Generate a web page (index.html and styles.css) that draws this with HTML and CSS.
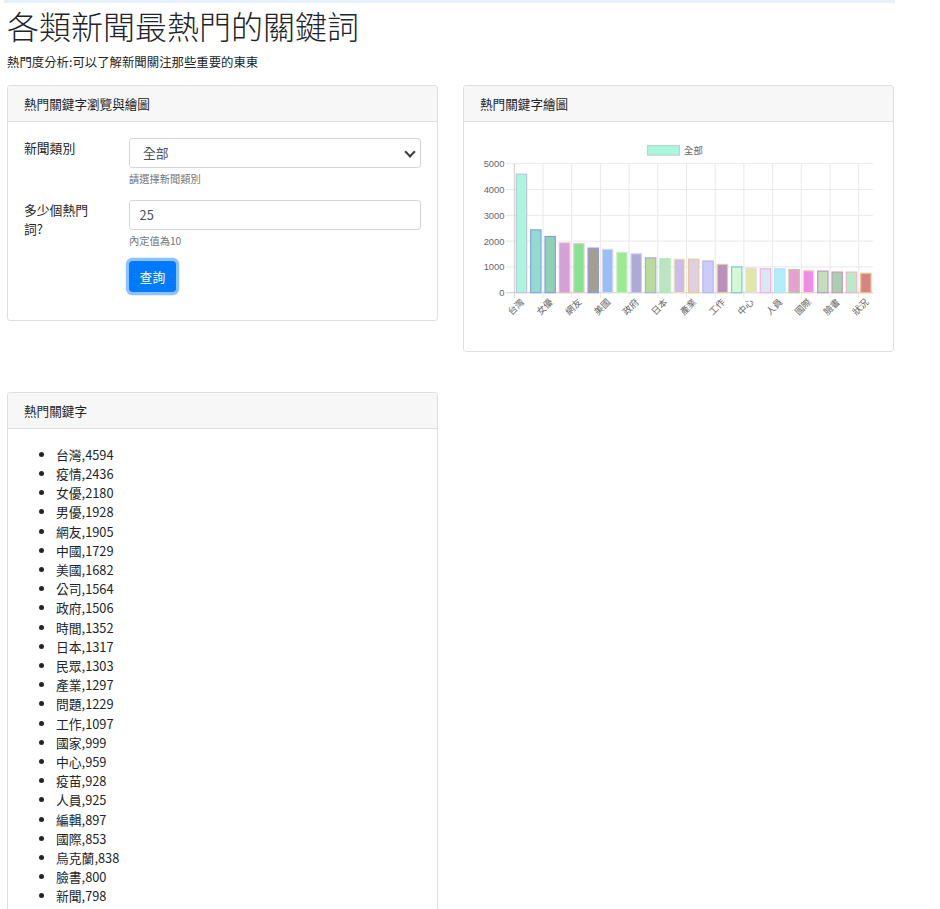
FILE: index.html
```html
<!DOCTYPE html>
<html lang="zh-Hant">
<head>
<meta charset="utf-8">
<title>各類新聞最熱門的關鍵詞</title>
<link rel="stylesheet" href="styles.css">
</head>
<body>
<div class="topbar"></div>
<div class="container">
  <h1 class="title">各類新聞最熱門的關鍵詞</h1>
  <p class="lead">熱門度分析:可以了解新聞關注那些重要的東東</p>

  <div class="row">
    <div class="card">
      <div class="card-header">熱門關鍵字瀏覽與繪圖</div>
      <div class="card-body">
        <div class="field">
          <label class="label">新聞類別</label>
          <div class="control">
            <span class="select-wrap">
              <select class="select">
                <option>全部</option>
              </select>
            </span>
            <div class="help">請選擇新聞類別</div>
          </div>
        </div>
        <div class="field">
          <label class="label">多少個熱門詞?</label>
          <div class="control">
            <input class="input" type="text" value="25">
            <div class="help">內定值為10</div>
          </div>
        </div>
        <div class="field">
          <span class="label"></span>
          <div class="control">
            <button class="btn" type="button">查詢</button>
          </div>
        </div>
      </div>
    </div>

    <div class="card">
      <div class="card-header">熱門關鍵字繪圖</div>
      <div class="card-body chart-body">
        <svg class="chart" width="429" height="229" viewBox="464 121 429 229" xmlns="http://www.w3.org/2000/svg">
          <g class="legend">
            <rect x="647.5" y="144.5" width="32" height="9.6" fill="#a8f8dc" stroke="#c4ccd6" stroke-width="1.2"/>
            <text x="684" y="152.6" class="tick">全部</text>
          </g>
          <g stroke="#e9e9e9" stroke-width="1">
            <line x1="506" y1="162.7" x2="873" y2="162.7"/>
            <line x1="506" y1="188.5" x2="873" y2="188.5"/>
            <line x1="506" y1="214.3" x2="873" y2="214.3"/>
            <line x1="506" y1="240.1" x2="873" y2="240.1"/>
            <line x1="506" y1="265.9" x2="873" y2="265.9"/>
            <line x1="543.0" y1="162.7" x2="543.0" y2="297"/>
            <line x1="571.7" y1="162.7" x2="571.7" y2="297"/>
            <line x1="600.4" y1="162.7" x2="600.4" y2="297"/>
            <line x1="629.1" y1="162.7" x2="629.1" y2="297"/>
            <line x1="657.8" y1="162.7" x2="657.8" y2="297"/>
            <line x1="686.5" y1="162.7" x2="686.5" y2="297"/>
            <line x1="715.2" y1="162.7" x2="715.2" y2="297"/>
            <line x1="743.9" y1="162.7" x2="743.9" y2="297"/>
            <line x1="772.6" y1="162.7" x2="772.6" y2="297"/>
            <line x1="801.3" y1="162.7" x2="801.3" y2="297"/>
            <line x1="830.0" y1="162.7" x2="830.0" y2="297"/>
            <line x1="858.7" y1="162.7" x2="858.7" y2="297"/>
          </g>
          <g stroke="#cfcfcf" stroke-width="1">
            <line x1="506" y1="291.7" x2="873" y2="291.7"/>
            <line x1="514.3" y1="162.7" x2="514.3" y2="297"/>
          </g>
          <g class="tick" text-anchor="end">
            <text x="504.5" y="166.1">5000</text>
            <text x="504.5" y="191.9">4000</text>
            <text x="504.5" y="217.7">3000</text>
            <text x="504.5" y="243.5">2000</text>
            <text x="504.5" y="269.3">1000</text>
            <text x="504.5" y="295.1">0</text>
          </g>
          <g stroke-width="1.2">
            <rect x="516.31" y="173.17" width="10.33" height="118.53" fill="#a8f8dc" stroke="#c4c0e4"/>
            <rect x="530.66" y="228.85" width="10.33" height="62.85" fill="#90dcd0" stroke="#88a4e4"/>
            <rect x="545.01" y="235.46" width="10.33" height="56.24" fill="#90d0b4" stroke="#889ee4"/>
            <rect x="559.36" y="241.96" width="10.33" height="49.74" fill="#d4a0d8" stroke="#f0b8c0"/>
            <rect x="573.71" y="242.55" width="10.33" height="49.15" fill="#84e490" stroke="#f4c8c4"/>
            <rect x="588.06" y="247.09" width="10.33" height="44.61" fill="#a29e90" stroke="#949ce8"/>
            <rect x="602.41" y="248.30" width="10.33" height="43.40" fill="#98c0f8" stroke="#dcd6ea"/>
            <rect x="616.76" y="251.35" width="10.33" height="40.35" fill="#9cea90" stroke="#ccf0cc"/>
            <rect x="631.11" y="252.85" width="10.33" height="38.85" fill="#aeaad6" stroke="#ccccf4"/>
            <rect x="645.46" y="256.82" width="10.33" height="34.88" fill="#b8dc9c" stroke="#aaaaea"/>
            <rect x="659.81" y="257.72" width="10.33" height="33.98" fill="#bce4c0" stroke="#acf2ac"/>
            <rect x="674.16" y="258.08" width="10.33" height="33.62" fill="#ccbcec" stroke="#ece8b8"/>
            <rect x="688.51" y="258.24" width="10.33" height="33.46" fill="#dcd0e4" stroke="#f0c49a"/>
            <rect x="702.86" y="259.99" width="10.33" height="31.71" fill="#ccccf8" stroke="#b6b6f4"/>
            <rect x="717.21" y="263.40" width="10.33" height="28.30" fill="#bc90bc" stroke="#dcd0a0"/>
            <rect x="731.56" y="265.93" width="10.33" height="25.77" fill="#d4f8d4" stroke="#74d0c8"/>
            <rect x="745.91" y="266.96" width="10.33" height="24.74" fill="#e0e8a4" stroke="#e6dee8"/>
            <rect x="760.26" y="267.76" width="10.33" height="23.94" fill="#d8e8f4" stroke="#f4b0e6"/>
            <rect x="774.61" y="267.83" width="10.33" height="23.87" fill="#b4ecf8" stroke="#b0e6fc"/>
            <rect x="788.96" y="268.56" width="10.33" height="23.14" fill="#e8a0cc" stroke="#bac8aa"/>
            <rect x="803.31" y="269.69" width="10.33" height="22.01" fill="#f08ce8" stroke="#fcd8b0"/>
            <rect x="817.66" y="270.08" width="10.33" height="21.62" fill="#c8dcc0" stroke="#b89cc8"/>
            <rect x="832.01" y="271.06" width="10.33" height="20.64" fill="#a8d0b0" stroke="#c89cb8"/>
            <rect x="846.36" y="271.11" width="10.33" height="20.59" fill="#b8ecc4" stroke="#eeb8c6"/>
            <rect x="860.71" y="272.30" width="10.33" height="19.40" fill="#d48484" stroke="#f4c490"/>
          </g>
          <g class="tick xlab" text-anchor="end">
            <text transform="translate(522.5 299.5) rotate(-45)" dy="0.35em">台灣</text>
            <text transform="translate(551.2 299.5) rotate(-45)" dy="0.35em">女優</text>
            <text transform="translate(579.9 299.5) rotate(-45)" dy="0.35em">網友</text>
            <text transform="translate(608.6 299.5) rotate(-45)" dy="0.35em">美國</text>
            <text transform="translate(637.3 299.5) rotate(-45)" dy="0.35em">政府</text>
            <text transform="translate(666.0 299.5) rotate(-45)" dy="0.35em">日本</text>
            <text transform="translate(694.7 299.5) rotate(-45)" dy="0.35em">產業</text>
            <text transform="translate(723.4 299.5) rotate(-45)" dy="0.35em">工作</text>
            <text transform="translate(752.1 299.5) rotate(-45)" dy="0.35em">中心</text>
            <text transform="translate(780.8 299.5) rotate(-45)" dy="0.35em">人員</text>
            <text transform="translate(809.5 299.5) rotate(-45)" dy="0.35em">國際</text>
            <text transform="translate(838.2 299.5) rotate(-45)" dy="0.35em">臉書</text>
            <text transform="translate(866.9 299.5) rotate(-45)" dy="0.35em">狀況</text>
          </g>
        </svg>
      </div>
    </div>
  </div>

  <div class="row">
    <div class="card">
      <div class="card-header">熱門關鍵字</div>
      <div class="card-body">
        <ul class="kw-list">
          <li>台灣,4594</li>
          <li>疫情,2436</li>
          <li>女優,2180</li>
          <li>男優,1928</li>
          <li>網友,1905</li>
          <li>中國,1729</li>
          <li>美國,1682</li>
          <li>公司,1564</li>
          <li>政府,1506</li>
          <li>時間,1352</li>
          <li>日本,1317</li>
          <li>民眾,1303</li>
          <li>產業,1297</li>
          <li>問題,1229</li>
          <li>工作,1097</li>
          <li>國家,999</li>
          <li>中心,959</li>
          <li>疫苗,928</li>
          <li>人員,925</li>
          <li>編輯,897</li>
          <li>國際,853</li>
          <li>烏克蘭,838</li>
          <li>臉書,800</li>
          <li>新聞,798</li>
          <li>狀況,752</li>
        </ul>
      </div>
    </div>
  </div>
</div>
</body>
</html>
```

FILE: styles.css
```css
* {
  box-sizing: border-box;
}

body {
  margin: 0;
  font-family: "Noto Sans CJK TC", "Noto Sans", sans-serif;
  font-size: 12.8px;
  line-height: 1.5;
  color: #212529;
  background: #ffffff;
}

.topbar {
  height: 3px;
  width: 891px;
  margin-left: 4px;
  background: #e6f0fa;
}

.container {
  width: 887px;
  margin-left: 7px;
}

.title {
  margin: 3px 0 9px;
  font-size: 32px;
  font-weight: 300;
  line-height: 38px;
  color: #212529;
}

.lead {
  margin: 0 0 12.6px;
  font-size: 12.4px;
  line-height: 19.2px;
}

.row {
  display: flex;
  align-items: flex-start;
  gap: 25px;
  margin-bottom: 40px;
}

.card {
  width: 431px;
  border: 1px solid #dfdfdf;
  border-radius: 3.2px;
  background: #fff;
  overflow: hidden;
}

.card-header {
  height: 36px;
  padding: 8px 16px;
  line-height: 19px;
  font-size: 12.6px;
  background: #f7f7f7;
  border-bottom: 1px solid #dfdfdf;
}

.card-body {
  padding: 16px;
}

.field {
  display: grid;
  grid-template-columns: 81px 292px;
  column-gap: 24px;
  margin-bottom: 12.8px;
}

.label {
  line-height: 19.2px;
}

.select-wrap {
  position: relative;
  display: block;
}

.select-wrap::after {
  content: "";
  position: absolute;
  right: 7px;
  top: 10px;
  width: 6px;
  height: 6px;
  border-right: 2px solid #3c4043;
  border-bottom: 2px solid #3c4043;
  transform: rotate(45deg);
  pointer-events: none;
}

.select,
.input {
  display: block;
  width: 100%;
  height: 30.4px;
  border: 1px solid #ced4da;
  border-radius: 3.2px;
  background: #fff;
  font-family: inherit;
  font-size: 12.8px;
  color: #495057;
  margin: 0;
}

.select {
  -webkit-appearance: none;
  appearance: none;
  padding: 0 24px 0 13px;
}

.input {
  padding: 0 9.6px;
}

.help {
  margin-top: 3.2px;
  font-size: 10.24px;
  line-height: 15.36px;
  color: #6c757d;
}

.btn {
  display: inline-block;
  height: 30.4px;
  padding: 0 9.6px;
  border: 1px solid #007bff;
  border-radius: 3.2px;
  background: #007bff;
  color: #fff;
  font-family: inherit;
  font-size: 12.8px;
  line-height: 19.2px;
  box-shadow: 0 0 0 3.2px rgba(0, 123, 255, 0.45);
}

.chart-body {
  padding: 0;
  height: 229px;
}

.chart {
  display: block;
}

.tick {
  font-family: "Liberation Sans", "Noto Sans CJK TC", sans-serif;
  font-size: 9.4px;
  fill: #666666;
}

.xlab {
  font-size: 9.2px;
}

.kw-list {
  margin: 0;
  padding-left: 32px;
}

.kw-list li {
  line-height: 19.2px;
}
```
